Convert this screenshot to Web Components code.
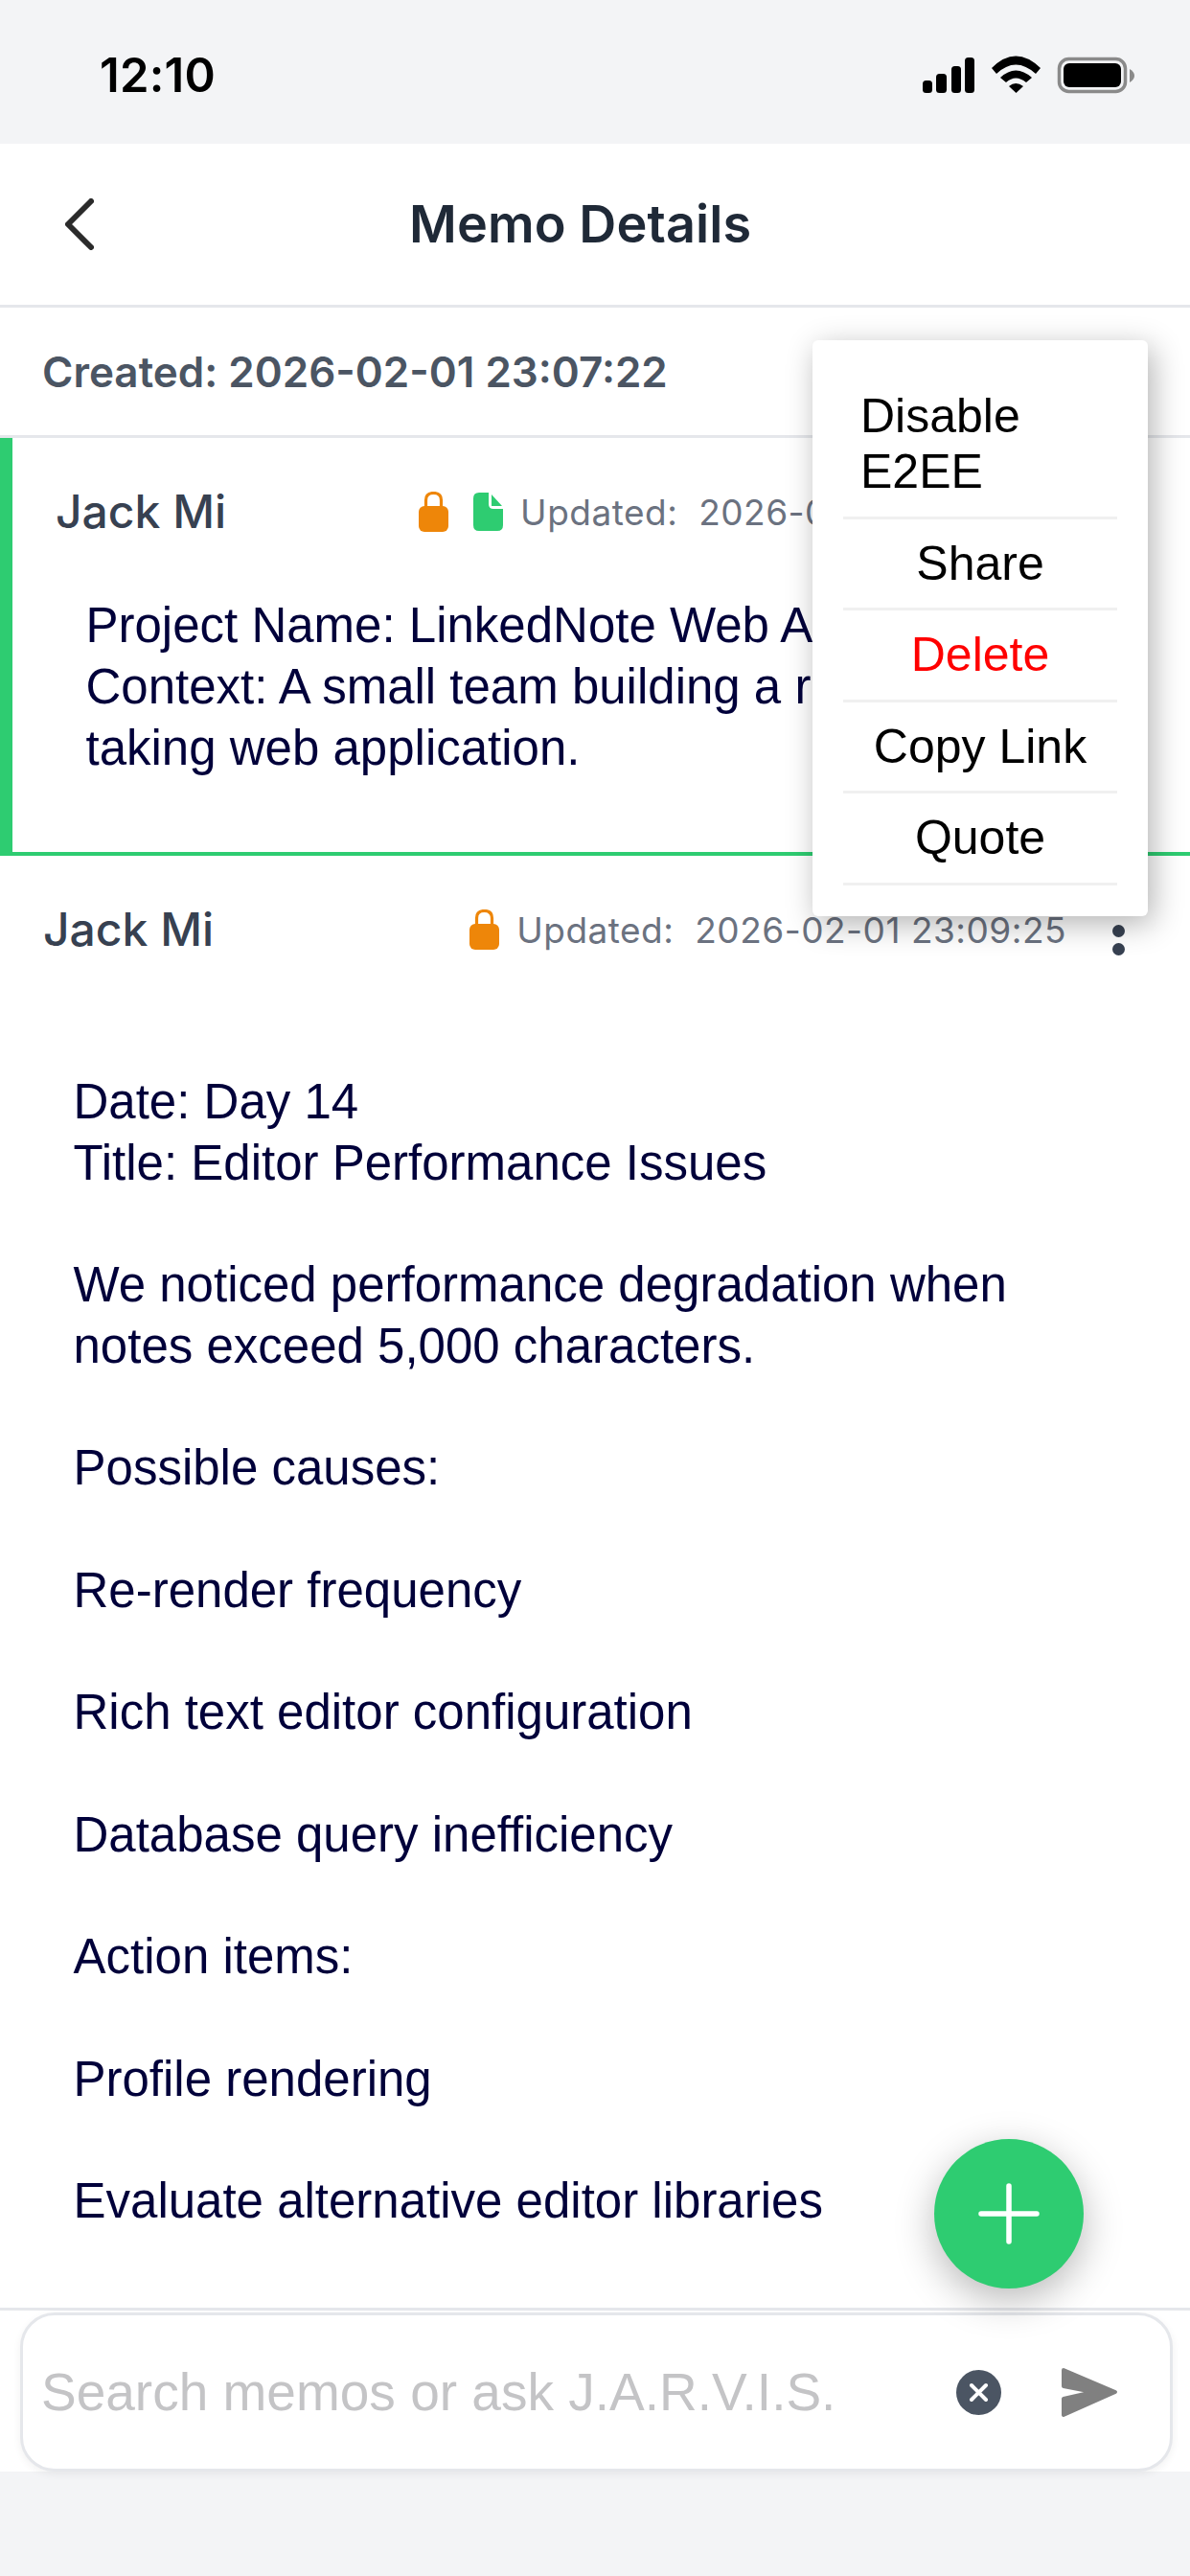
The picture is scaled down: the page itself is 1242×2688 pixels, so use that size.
<!DOCTYPE html>
<html lang="en">
<head>
<meta charset="utf-8">
<title>Memo Details</title>
<style>
html, body { margin: 0; padding: 0; background: #f3f4f6; }
body { width: 1242px; height: 2688px; overflow: hidden; font-family: "Liberation Sans", Arial, sans-serif; }
</style>
</head>
<body>
<memo-app></memo-app>
<script>
"use strict";

class BaseComponent extends HTMLElement {
    constructor() {
        super();
        this.attachShadow({mode: "open"});
    }

    connectedCallback() {
        this.shadowRoot.innerHTML = `<style>${this.css}</style>${this.html}`;
    }
}

class StatusBar extends BaseComponent {
    get css() {
        return `
            :host { display: flex; align-items: center; height: 150px; background: #f3f4f6; box-sizing: border-box; padding: 0 58px 0 104px; }
            .time { font: 600 49px/1 Inter, "Liberation Sans", sans-serif; color: #000; margin-top: 6px; flex: 1; letter-spacing: .2px; }
            svg { display: block; margin-top: 6px; }
        `;
    }

    get html() {
        return `
            <span class="time">12:10</span>
            <svg width="221" height="40" viewBox="963 58 221 40">
                <rect x="963" y="84" width="10" height="13" rx="3.5"/>
                <rect x="977" y="77" width="11" height="20" rx="3.5"/>
                <rect x="993" y="69" width="10" height="28" rx="3.5"/>
                <rect x="1007" y="60" width="10" height="37" rx="3.5"/>
                <path d="M1035 71 Q1060 46 1086 71 L1081 77 Q1060 58 1040 77Z"/>
                <path d="M1044 81 Q1060 66 1077 81 L1071 86 Q1060 77 1050 86Z"/>
                <path d="M1053 90 Q1060 84 1068 90 L1060.500 97Z"/>
                <rect x="1105.500" y="61.500" width="69" height="34" rx="10" fill="none" stroke="#8a8a8a" stroke-width="3.500"/>
                <rect x="1110" y="66" width="60" height="25" rx="6"/>
                <path d="M1179 72 Q1184 75 1184 79 Q1184 83 1179 86Z" fill="#8a8a8a"/>
            </svg>
        `;
    }
}

class AppHeader extends BaseComponent {
    get css() {
        return `
            :host { display: flex; align-items: center; height: 168px; background: #fff; padding-left: 68px; flex: none; }
            svg { display: block; flex: none; }
            h1 { margin: 0 0 0 329px; font: 600 54px/1 Inter, "Liberation Sans", sans-serif; color: #1f2937; letter-spacing: .1px; }
        `;
    }

    get html() {
        return `
            <svg width="30" height="54" viewBox="0 0 30 54"><path d="M27 3 L3 27 L27 51" fill="none" stroke="#2b2b2b" stroke-width="6" stroke-linecap="round" stroke-linejoin="round"/></svg>
            <h1><slot></slot></h1>
        `;
    }
}

class MemoMeta extends BaseComponent {
    get css() {
        return `
            :host { display: flex; align-items: center; height: 133px; background: #fff; border-top: 3px solid #e5e7eb; border-bottom: 3px solid #e5e7eb; padding-left: 44px; flex: none; font: 600 44px/1 Inter, "Liberation Sans", sans-serif; color: #4b5563; }
        `;
    }

    get html() {
        return `<slot></slot>`;
    }
}

class MemoCard extends BaseComponent {
    get css() {
        return `
            :host { display: block; background: #fff; flex: none; box-sizing: border-box; --gap: 7px; }
            :host([active]) { border-left: 13px solid #2ecc71; border-bottom: 4px solid #2ecc71; height: 436px; --gap: 10px; }
            .top { display: flex; align-items: center; height: 154px; padding: 0 67px 0 45px; }
            .name { flex: 1; font: 500 48px/1 Inter, "Liberation Sans", sans-serif; color: #374151; }
            .icon { display: block; flex: none; margin-right: 18px; }
            .lock { margin-right: 18px; }
            :host([active]) .lock { margin-right: 26px; }
            .date { font: 400 37px/1 Inter, "Liberation Sans", sans-serif; color: #6b7280; white-space: pre; letter-spacing: .5px; }
            .dots { width: 14px; margin-left: 48px; display: flex; flex-direction: column; gap: 6px; padding-top: 22px; flex: none; }
            .dots i { display: block; width: 13px; height: 13px; border-radius: 50%; background: #374151; }
            .body { margin: 0; padding: 0 32px 0 76.500px; font: 51px/63.75px "Liberation Sans", Arial, sans-serif; color: #00003a; white-space: pre-wrap; margin-top: var(--gap); }
        `;
    }

    get html() {
        const file = this.hasAttribute("attached") ? `
            <svg class="icon" width="31" height="40" viewBox="0 0 31 40"><path d="M6 0 H16 V12 Q16 17 21 17 H31 V34 Q31 40 25 40 H6 Q0 40 0 34 V6 Q0 0 6 0Z" fill="#2ecc71"/><path d="M19 2 L30 14 H19Z" fill="#2ecc71"/></svg>` : "";
        return `
            <div class="top">
                <span class="name">${this.getAttribute("author")}</span>
                <svg class="icon lock" width="31" height="42" viewBox="0 0 31 42"><path d="M7.500 16 V9 Q7.500 1.500 15.500 1.500 Q23.500 1.500 23.500 9 V16" fill="none" stroke="#ee8609" stroke-width="3.200"/><rect y="15" width="31" height="27" rx="6" fill="#ee8609"/></svg>
                ${file}
                <span class="date">Updated:  ${this.getAttribute("updated")}</span>
                <span class="dots"><i></i><i></i></span>
            </div>
            <p class="body"><slot></slot></p>
        `;
    }
}

class ActionMenu extends BaseComponent {
    get css() {
        return `
            :host { position: absolute; left: 848px; top: 355px; width: 350px; box-sizing: border-box; padding: 33px 32px 32px; background: #fff; border-radius: 6px; box-shadow: 5px 8px 32px rgba(0, 0, 0, .3); display: flex; flex-direction: column; }
        `;
    }

    get html() {
        return `<slot></slot>`;
    }
}

class MenuItem extends BaseComponent {
    get css() {
        return `
            :host { display: flex; justify-content: center; padding: 17.25px 18px; border-bottom: 3px solid #f0f0f0; font: 50px/58px "Liberation Sans", Arial, sans-serif; color: #000; }
            :host([danger]) { color: #f00; }
        `;
    }

    get html() {
        return `<span><slot></slot></span>`;
    }
}

class FabButton extends BaseComponent {
    get css() {
        return `
            :host { position: absolute; left: 975px; top: 2232px; width: 156px; height: 156px; border-radius: 50%; background: #2ecc71; box-shadow: 0 12px 40px rgba(0, 0, 0, .28); display: flex; align-items: center; justify-content: center; }
        `;
    }

    get html() {
        return `<svg width="64" height="64" viewBox="0 0 64 64"><path d="M32 3 V61 M3 32 H61" stroke="#fff" stroke-width="5.500" stroke-linecap="round"/></svg>`;
    }
}

class SearchBar extends BaseComponent {
    get css() {
        return `
            :host { display: block; height: 171px; box-sizing: border-box; background: #fff; border-top: 3px solid #e5e7eb; padding: 2px 18px 0 21px; flex: none; }
            .box { display: flex; align-items: center; height: 166px; box-sizing: border-box; border: 3px solid #e5e7eb; border-radius: 36px; background: #fff; padding: 0 54px 0 19px; box-shadow: 0 3px 9px rgba(0, 0, 0, .06); }
            .text { flex: 1; font: 55px/1 "Liberation Sans", Arial, sans-serif; color: #c4c4c6; white-space: nowrap; }
            svg { display: block; flex: none; }
            .clear { margin-right: 62px; }
        `;
    }

    get html() {
        return `
            <div class="box">
                <span class="text"><slot></slot></span>
                <svg class="clear" width="47" height="47" viewBox="0 0 47 47"><circle cx="23.500" cy="23.500" r="23.500" fill="#4b5563"/><path d="M16 16 L31 31 M31 16 L16 31" stroke="#fff" stroke-width="4" stroke-linecap="round"/></svg>
                <svg width="60" height="53" viewBox="0 0 60 53"><path d="M3 3 L57 26 L3 50 V33 L34 26 L3 20Z" fill="#808080" stroke="#808080" stroke-width="4" stroke-linejoin="round"/></svg>
            </div>
        `;
    }
}

class MemoApp extends BaseComponent {
    get css() {
        return `
            :host { display: flex; flex-direction: column; position: relative; width: 1242px; height: 2688px; background: #f3f4f6; }
            .list { height: 1951px; overflow: hidden; background: #fff; display: flex; flex-direction: column; flex: none; }
        `;
    }

    get html() {
        return `
            <status-bar></status-bar>
            <app-header>Memo Details</app-header>
            <memo-meta>Created: 2026-02-01 23:07:22</memo-meta>
            <div class="list">
                <memo-card active attached author="Jack Mi" updated="2026-02-01 23:07:22">Project Name: LinkedNote Web App
Context: A small team building a real-time note-
taking web application.</memo-card>
                <memo-card author="Jack Mi" updated="2026-02-01 23:09:25">
Date: Day 14
Title: Editor Performance Issues

We noticed performance degradation when
notes exceed 5,000 characters.

Possible causes:

Re-render frequency

Rich text editor configuration

Database query inefficiency

Action items:

Profile rendering

Evaluate alternative editor libraries</memo-card>
            </div>
            <search-bar>Search memos or ask J.A.R.V.I.S.</search-bar>
            <action-menu>
                <menu-item>Disable E2EE</menu-item>
                <menu-item>Share</menu-item>
                <menu-item danger>Delete</menu-item>
                <menu-item>Copy Link</menu-item>
                <menu-item>Quote</menu-item>
            </action-menu>
            <fab-button></fab-button>
        `;
    }
}

customElements.define("status-bar", StatusBar);
customElements.define("app-header", AppHeader);
customElements.define("memo-meta", MemoMeta);
customElements.define("memo-card", MemoCard);
customElements.define("action-menu", ActionMenu);
customElements.define("menu-item", MenuItem);
customElements.define("fab-button", FabButton);
customElements.define("search-bar", SearchBar);
customElements.define("memo-app", MemoApp);
</script>
</body>
</html>
